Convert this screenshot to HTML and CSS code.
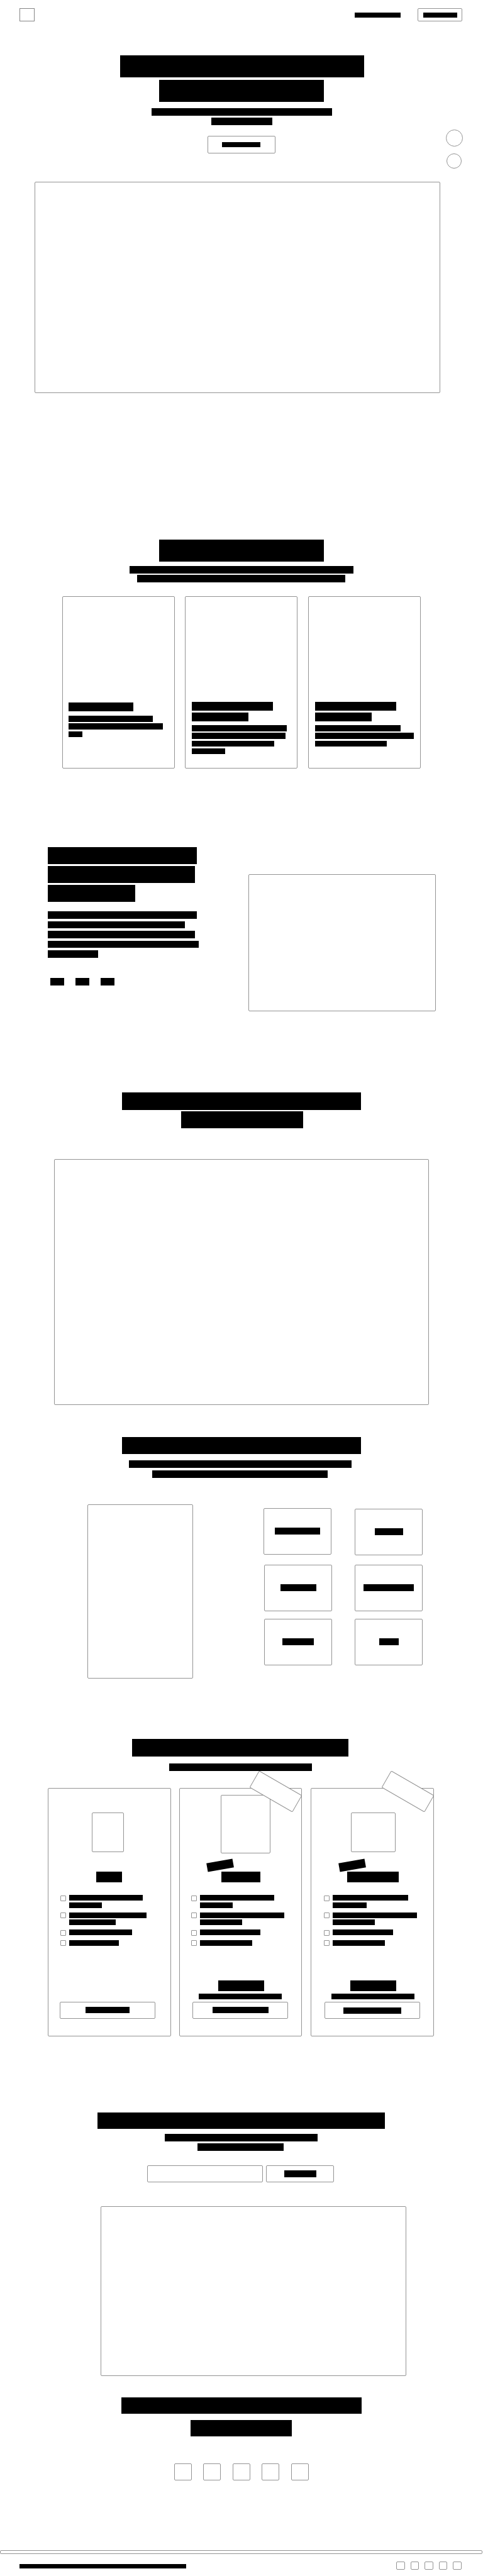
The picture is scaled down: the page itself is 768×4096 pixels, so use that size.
FILE: index.html
```html
<!DOCTYPE html>
<html lang="en">
<head>
<meta charset="utf-8">
<title>Landing page wireframe</title>
<link rel="stylesheet" href="styles.css">
</head>
<body>
<header class="header">
  <div class="logo"></div>
  <div class="bar nav-link"></div>
  <div class="frame nav-button"><div class="bar"></div></div>
</header>

<section class="hero">
  <div class="bar title-1"></div>
  <div class="bar title-2"></div>
  <div class="bar sub-1"></div>
  <div class="bar sub-2"></div>
  <div class="frame cta"><div class="bar"></div></div>
  <div class="frame media"></div>
  <div class="frame bubble bubble-1"></div>
  <div class="frame bubble bubble-2"></div>
</section>

<section class="features">
  <div class="bar title"></div>
  <div class="bar sub-1"></div>
  <div class="bar sub-2"></div>
  <div class="cards">
    <div class="frame card card-1">
      <div class="bar name"></div>
      <div class="bar line l1"></div><div class="bar line l2"></div><div class="bar line l3"></div>
    </div>
    <div class="frame card card-2">
      <div class="bar name"></div><div class="bar name name-2"></div>
      <div class="bar line l1"></div><div class="bar line l2"></div><div class="bar line l3"></div><div class="bar line l4"></div>
    </div>
    <div class="frame card card-3">
      <div class="bar name"></div><div class="bar name name-2"></div>
      <div class="bar line l1"></div><div class="bar line l2"></div><div class="bar line l3"></div>
    </div>
  </div>
</section>

<section class="about">
  <div class="copy">
    <div class="bar head h1"></div><div class="bar head h2"></div><div class="bar head h3"></div>
    <div class="text">
      <div class="bar t1"></div><div class="bar t2"></div><div class="bar t3"></div><div class="bar t4"></div><div class="bar t5"></div>
    </div>
    <div class="stats"><div class="bar"></div><div class="bar"></div><div class="bar"></div></div>
  </div>
  <div class="frame media"></div>
</section>

<section class="showcase">
  <div class="bar title-1"></div>
  <div class="bar title-2"></div>
  <div class="frame media"></div>
</section>

<section class="topics">
  <div class="bar title"></div>
  <div class="bar sub-1"></div>
  <div class="bar sub-2"></div>
  <div class="split">
    <div class="frame phone"></div>
    <div class="tiles">
      <div class="tile-col col-a">
        <div class="frame tile"><div class="bar b1"></div></div>
        <div class="frame tile"><div class="bar b2"></div></div>
        <div class="frame tile"><div class="bar b3"></div></div>
      </div>
      <div class="tile-col col-b">
        <div class="frame tile"><div class="bar b1"></div></div>
        <div class="frame tile"><div class="bar b2"></div></div>
        <div class="frame tile"><div class="bar b3"></div></div>
      </div>
    </div>
  </div>
</section>

<section class="plans">
  <div class="bar title"></div>
  <div class="bar sub"></div>
  <div class="plan-row">
    <div class="frame plan plan-1">
      <div class="art"><div class="frame"></div></div>
      <div class="bar name"></div>
      <ul class="list">
        <li><i class="frame"></i><span><b class="bar i1"></b><b class="bar i2"></b></span></li>
        <li><i class="frame"></i><span><b class="bar i3"></b><b class="bar i4"></b></span></li>
        <li><i class="frame"></i><span><b class="bar i5"></b></span></li>
        <li><i class="frame"></i><span><b class="bar i6"></b></span></li>
      </ul>
      <div class="price"></div>
      <div class="frame button"><div class="bar"></div></div>
    </div>
    <div class="frame plan plan-2">
      <div class="frame ribbon"></div>
      <div class="bar sticker"></div>
      <div class="art"><div class="frame"></div></div>
      <div class="bar name"></div>
      <ul class="list">
        <li><i class="frame"></i><span><b class="bar i1"></b><b class="bar i2"></b></span></li>
        <li><i class="frame"></i><span><b class="bar i3"></b><b class="bar i4"></b></span></li>
        <li><i class="frame"></i><span><b class="bar i5"></b></span></li>
        <li><i class="frame"></i><span><b class="bar i6"></b></span></li>
      </ul>
      <div class="price"><div class="bar amount"></div><div class="bar note"></div></div>
      <div class="frame button"><div class="bar"></div></div>
    </div>
    <div class="frame plan plan-3">
      <div class="frame ribbon"></div>
      <div class="bar sticker"></div>
      <div class="art"><div class="frame"></div></div>
      <div class="bar name"></div>
      <ul class="list">
        <li><i class="frame"></i><span><b class="bar i1"></b><b class="bar i2"></b></span></li>
        <li><i class="frame"></i><span><b class="bar i3"></b><b class="bar i4"></b></span></li>
        <li><i class="frame"></i><span><b class="bar i5"></b></span></li>
        <li><i class="frame"></i><span><b class="bar i6"></b></span></li>
      </ul>
      <div class="price"><div class="bar amount"></div><div class="bar note"></div></div>
      <div class="frame button"><div class="bar"></div></div>
    </div>
  </div>
</section>

<section class="signup">
  <div class="bar title"></div>
  <div class="bar sub-1"></div>
  <div class="bar sub-2"></div>
  <div class="form">
    <div class="frame field"></div>
    <div class="frame send"><div class="bar"></div></div>
  </div>
  <div class="frame media"></div>
</section>

<section class="social">
  <div class="bar title-1"></div>
  <div class="bar title-2"></div>
  <div class="icons">
    <div class="frame"></div><div class="frame"></div><div class="frame"></div><div class="frame"></div><div class="frame"></div>
  </div>
</section>

<footer>
  <div class="frame strip"></div>
  <div class="foot">
    <div class="bar legal"></div>
    <div class="foot-icons">
      <div class="frame"></div><div class="frame"></div><div class="frame"></div><div class="frame"></div><div class="frame"></div>
    </div>
  </div>
</footer>
</body>
</html>
```
FILE: styles.css
```css
* { box-sizing: border-box; }
body { margin: 0; width: 768px; height: 4096px; background: #fff; overflow: hidden; }
section { display: flow-root; }
.bar { display: block; background: #000; }
.frame { display: block; border: 1px solid #939393; border-radius: 2px; background: #fff; }

/* Header */
.header { display: flex; align-items: flex-start; height: 34px; padding: 13px 33px 0 31px; }
.logo { width: 24px; height: 21px; border: 1px solid #858585; }
.nav-link { width: 73px; height: 8px; margin: 7px 27px 0 auto; }
.nav-button { width: 71px; height: 21px; padding: 6px 0 0 8px; }
.nav-button .bar { width: 54px; height: 8px; }

/* Hero */
.hero { position: relative; height: 591px; }
.hero .title-1 { width: 388px; height: 35px; margin: 54px 0 0 191px; }
.hero .title-2 { width: 262px; height: 35px; margin: 4px 0 0 253px; }
.hero .sub-1 { width: 287px; height: 12px; margin: 10px 0 0 241px; }
.hero .sub-2 { width: 97px; height: 12px; margin: 3px 0 0 336px; }
.cta { width: 108px; height: 28px; margin: 17px 0 0 330px; padding: 9px 0 0 22px; }
.cta .bar { width: 61px; height: 8px; }
.hero .media { width: 645px; height: 336px; margin: 45px 0 0 55px; }
.bubble { position: absolute; border-radius: 50%; }
.bubble-1 { left: 709px; top: 172px; width: 27px; height: 27px; }
.bubble-2 { left: 710px; top: 210px; width: 24px; height: 24px; }

/* Features */
.features { height: 597px; }
.features .title { width: 262px; height: 35px; margin: 233px 0 0 253px; }
.features .sub-1 { width: 356px; height: 12px; margin: 7px 0 0 206px; }
.features .sub-2 { width: 331px; height: 12px; margin: 2px 0 0 218px; }
.cards { display: flex; gap: 16px; margin: 22px 0 0 99px; }
.card { width: 179px; height: 274px; padding: 167px 0 0 10px; }
.card-1 { padding: 168px 0 0 9px; }
.card-3 { margin-left: 1px; }
.card .name { width: 129px; height: 14px; }
.card-1 .name { width: 103px; margin-bottom: 7px; }
.card .name-2 { width: 90px; margin: 3px 0 6px; }
.line { height: 9.5px; margin-bottom: 2.75px; }
.card-1 .l1 { width: 134px; }
.card-1 .l2 { width: 150px; }
.card-1 .l3 { width: 22px; }
.card-2 .l1 { width: 151px; }
.card-2 .l2 { width: 149px; }
.card-2 .l3 { width: 131px; }
.card-2 .l4 { width: 53px; }
.card-3 .l1 { width: 136px; }
.card-3 .l2 { width: 157px; }
.card-3 .l3 { width: 114px; }

/* About */
.about { display: flex; height: 387px; padding: 125px 0 0 76px; }
.copy { width: 319px; }
.head { height: 27px; margin-bottom: 2.85px; }
.head.h1 { width: 237px; }
.head.h2 { width: 234px; }
.head.h3 { width: 139px; }
.text { margin-top: 15.8px; display: flex; flex-direction: column; gap: 3.95px; }
.text .bar { height: 11.5px; }
.text .t1 { width: 237px; }
.text .t2 { width: 218px; }
.text .t3 { width: 234px; }
.text .t4 { width: 240px; }
.text .t5 { width: 80px; }
.stats { display: flex; gap: 18px; margin: 32px 0 0 4px; }
.stats .bar { width: 22px; height: 12px; }
.about .media { width: 298px; height: 218px; margin-top: 43px; }

/* Showcase */
.showcase { height: 625px; }
.showcase .title-1 { width: 380px; height: 28px; margin: 127.5px 0 0 194px; }
.showcase .title-2 { width: 194px; height: 27px; margin: 2.5px 0 0 288px; }
.showcase .media { width: 596px; height: 391px; margin: 49px 0 0 86px; }

/* Topics */
.topics { height: 435px; }
.topics .title { width: 380px; height: 27px; margin: 51px 0 0 194px; }
.topics .sub-1 { width: 354px; height: 12px; margin: 10px 0 0 205px; }
.topics .sub-2 { width: 279px; height: 12px; margin: 3.5px 0 0 242px; }
.split { display: flex; margin: 42.5px 0 0 139px; }
.phone { width: 168px; height: 277px; }
.tiles { display: flex; gap: 36px; margin-left: 113px; }
.tile { width: 108px; height: 74px; padding-top: 30px; }
.tile .bar { height: 11px; margin: 0 auto; }
.col-a { padding-top: 6px; }
.col-b { padding-top: 7px; }
.col-a .tile:first-child { margin: 0 0 16px -1px; }
.col-b .tile:first-child { margin-bottom: 15px; }
.tile:nth-child(2) { margin-bottom: 12px; }
.col-a .b1 { width: 72px; }
.col-a .b2 { width: 57px; }
.col-a .b3 { width: 50px; }
.col-b .b1 { width: 45px; }
.col-b .b2 { width: 80px; }
.col-b .b3 { width: 31px; }

/* Plans */
.plans { height: 569px; }
.plans .title { width: 344px; height: 28px; margin: 96px 0 0 210px; }
.plans .sub { width: 227px; height: 12px; margin: 11px 0 0 269px; }
.plan-row { display: flex; margin: 27px 0 0 76px; }
.plan { position: relative; width: 196px; height: 395px; }
.plan-2 { width: 195px; margin-left: 13px; }
.plan-3 { margin-left: 14px; }
.art { height: 132px; padding-top: 38px; }
.art .frame { width: 51px; height: 63px; margin-left: 69px; }
.plan-2 .art { padding-top: 10px; }
.plan-2 .art .frame { width: 79px; height: 93px; margin-left: 65px; }
.plan-3 .art .frame { width: 71px; margin-left: 63px; }
.plan .name { width: 41px; height: 17px; margin-left: 76px; }
.plan-2 .name { width: 62px; margin-left: 66px; }
.plan-3 .name { width: 82px; margin-left: 57px; }
.ribbon { position: absolute; z-index: 2; left: 112.5px; top: -11.4px; width: 79px; height: 31px; transform: rotate(30deg); }
.plan-3 .ribbon { left: 113.8px; }
.sticker { position: absolute; z-index: 2; left: 43px; top: 114.7px; width: 42px; height: 13.5px; transform: rotate(-10deg); }
.plan-3 .sticker { left: 44.2px; }
.list { list-style: none; margin: 20.2px 0 0 19px; padding: 0; height: 127.8px; }
.plan-2 .list { margin-left: 18px; }
.plan-3 .list { margin-left: 20px; }
.list li { display: flex; gap: 5px; margin-bottom: 6.9px; }
.list i { width: 9px; height: 9px; border-radius: 1px; margin-top: .4px; }
.list span { display: flex; flex-direction: column; gap: 2.7px; }
.list b { height: 9px; }
.i1 { width: 118px; }
.i2 { width: 52px; }
.i3 { width: 134px; }
.i4 { width: 67px; }
.i5 { width: 96px; }
.i6 { width: 83px; }
.plan-1 .i1 { width: 117px; }
.plan-1 .i3 { width: 123px; }
.plan-1 .i4 { width: 74px; }
.plan-1 .i5 { width: 100px; }
.plan-1 .i6 { width: 79px; }
.plan-3 .i1 { width: 120px; }
.plan-3 .i2 { width: 54px; }
.price { height: 42px; padding-top: 8px; }
.amount { width: 73px; height: 17px; margin-left: 61px; }
.note { width: 132px; height: 9px; margin: 4px 0 0 30px; }
.plan-3 .amount { margin-left: 62px; }
.plan-3 .note { margin-left: 32px; }
.button { width: 152px; height: 27px; margin-left: 18px; padding: 7px 0 0 40px; }
.button .bar { width: 70px; height: 10.5px; }
.plan-2 .button { margin-left: 20px; padding-left: 31px; }
.plan-2 .button .bar { width: 89px; }
.plan-3 .button { margin-left: 21px; padding: 8px 0 0 29px; }
.plan-3 .button .bar { width: 92px; }

/* Signup */
.signup { height: 540px; }
.signup .title { width: 457px; height: 26px; margin: 121px 0 0 155px; }
.signup .sub-1 { width: 243px; height: 12px; margin: 8px 0 0 262px; }
.signup .sub-2 { width: 137px; height: 12px; margin: 3px 0 0 314px; }
.form { display: flex; gap: 5px; margin: 23px 0 0 234px; }
.field { width: 184px; height: 27px; }
.send { width: 108px; height: 27px; padding: 7px 0 0 28px; }
.send .bar { width: 51px; height: 11px; }
.signup .media { width: 486px; height: 270px; margin: 38px 0 0 160px; }

/* Social */
.social { height: 277px; }
.social .title-1 { width: 382px; height: 26px; margin: 34px 0 0 193px; }
.social .title-2 { width: 161px; height: 26px; margin: 10px 0 0 303px; }
.icons { display: flex; gap: 18.5px; margin: 43px 0 0 276.7px; }
.icons .frame { width: 28px; height: 27px; }

/* Footer */
.strip { width: 767px; height: 6px; }
.foot { display: flex; justify-content: space-between; padding: 12px 34px 0 31px; }
.legal { width: 265px; height: 7px; margin-top: 4px; }
.foot-icons { display: flex; gap: 9px; }
.foot-icons .frame { width: 13.6px; height: 13px; }
```
